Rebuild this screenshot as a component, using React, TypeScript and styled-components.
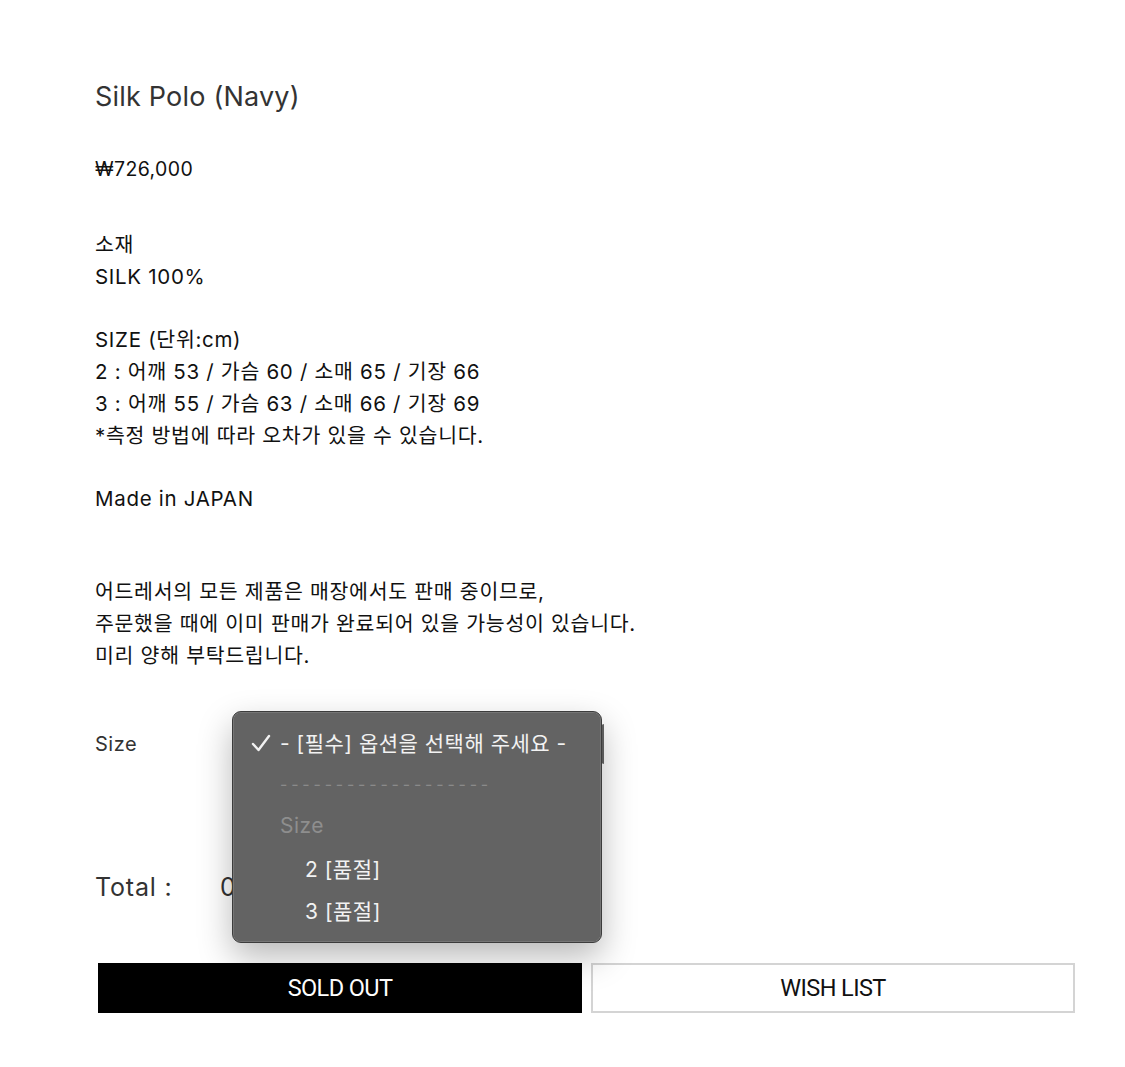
import React from 'react';
import styled, { createGlobalStyle } from 'styled-components';

const GlobalStyle = createGlobalStyle`
	html, body {
		margin: 0;
		padding: 0;
		background: #fff;
	}
	body {
		font-family: Inter, 'Noto Sans CJK KR', sans-serif;
		color: #111;
	}
`;

const Page = styled.div`
	width: 1125px;
	min-height: 1067px;
	box-sizing: border-box;
	padding: 79px 51px 0 95px;
`;

const Title = styled.h1`
	margin: 0;
	font-size: 27px;
	line-height: 36px;
	font-weight: 400;
	color: #333;
	letter-spacing: 0.2px;
`;

const Price = styled.div`
	margin-top: 38px;
	font-size: 19.5px;
	line-height: 32px;
	letter-spacing: 0.4px;
`;

const Description = styled.div<{ $gap: number }>`
	margin-top: ${({ $gap }) => $gap}px;
	font-size: 20.5px;
	line-height: 31.8px;
	letter-spacing: 0.7px;
	white-space: pre-line;
`;

const OptionRow = styled.div`
	margin-top: 52px;
	display: flex;
	align-items: center;
	height: 40px;
`;

const OptionLabel = styled.div`
	width: 137px;
	font-size: 20px;
	letter-spacing: 0.5px;
	color: #333;
`;

const SelectWrap = styled.div`
	position: relative;
	width: 372px;
	height: 40px;
`;

const SelectBox = styled.div`
	height: 40px;
	box-sizing: border-box;
	border: 1px solid #ccc;
	border-right: 2px solid #666;
`;

const Menu = styled.ul`
	position: absolute;
	left: 0;
	top: -13px;
	width: 370px;
	box-sizing: border-box;
	margin: 0;
	padding: 9px 0 11px;
	list-style: none;
	background: #636363;
	border: 1px solid #3c3c3c;
	border-radius: 9px;
	box-shadow: 0 14px 34px rgba(0, 0, 0, 0.28), 0 0 0 0.5px rgba(255, 255, 255, 0.25) inset;
	font-family: Inter, 'Noto Sans CJK KR', sans-serif;
	z-index: 5;
`;

const MenuItem = styled.li<{ $muted?: boolean; $indent?: boolean }>`
	display: flex;
	align-items: center;
	height: 42px;
	padding-left: ${({ $indent }) => ($indent ? 72 : 47)}px;
	position: relative;
	font-size: 21px;
	letter-spacing: 0.5px;
	color: ${({ $muted }) => ($muted ? '#8e8e8e' : '#f2f2f2')};
	white-space: nowrap;
`;

const Check = styled.svg`
	position: absolute;
	left: 18px;
	top: 13px;
	width: 20px;
	height: 18px;
`;

const Dashes = styled.span`
	letter-spacing: 3.8px;
	font-size: 16px;
	color: #8a8a8a;
`;

const TotalRow = styled.div`
	margin-top: 108px;
	display: flex;
	align-items: center;
	font-size: 25px;
	letter-spacing: 0.8px;
	color: #333;
`;

const TotalLabel = styled.span`
	width: 125px;
`;

const Buttons = styled.div`
	margin-top: 61px;
	display: grid;
	grid-template-columns: 484px 484px;
	gap: 9px;
	padding-left: 3px;
`;

const ActionButton = styled.button<{ $dark?: boolean }>`
	height: 50px;
	font-family: Roboto, 'Noto Sans', sans-serif;
	font-size: 23.5px;
	letter-spacing: -0.6px;
	cursor: pointer;
	background: ${({ $dark }) => ($dark ? '#000' : '#fff')};
	color: ${({ $dark }) => ($dark ? '#fff' : '#111')};
	border: ${({ $dark }) => ($dark ? 'none' : '2px solid #d4d4d4')};
`;

export default function App() {
	return (
		<Page>
			<GlobalStyle />
			<Title>Silk Polo (Navy)</Title>
			<Price>₩726,000</Price>
			<Description $gap={44}>
				{`소재
SILK 100%

SIZE (단위:cm)
2 : 어깨 53 / 가슴 60 / 소매 65 / 기장 66
3 : 어깨 55 / 가슴 63 / 소매 66 / 기장 69
*측정 방법에 따라 오차가 있을 수 있습니다.

Made in JAPAN`}
			</Description>
			<Description $gap={61}>
				{`어드레서의 모든 제품은 매장에서도 판매 중이므로,
주문했을 때에 이미 판매가 완료되어 있을 가능성이 있습니다.
미리 양해 부탁드립니다.`}
			</Description>
			<OptionRow>
				<OptionLabel>Size</OptionLabel>
				<SelectWrap>
					<SelectBox />
					<Menu>
						<MenuItem>
							<Check viewBox='0 0 20 18'>
								<path d='M2 10 L7.5 16 L18 2' fill='none' stroke='#f2f2f2' strokeWidth='2.4' strokeLinecap='round' strokeLinejoin='round' />
							</Check>
							- [필수] 옵션을 선택해 주세요 -
						</MenuItem>
						<MenuItem $muted>
							<Dashes>-------------------</Dashes>
						</MenuItem>
						<MenuItem $muted>Size</MenuItem>
						<MenuItem $indent>2 [품절]</MenuItem>
						<MenuItem $indent>3 [품절]</MenuItem>
					</Menu>
				</SelectWrap>
			</OptionRow>
			<TotalRow>
				<TotalLabel>Total :</TotalLabel>
				<span>0</span>
			</TotalRow>
			<Buttons>
				<ActionButton $dark>SOLD OUT</ActionButton>
				<ActionButton>WISH LIST</ActionButton>
			</Buttons>
		</Page>
	);
}
